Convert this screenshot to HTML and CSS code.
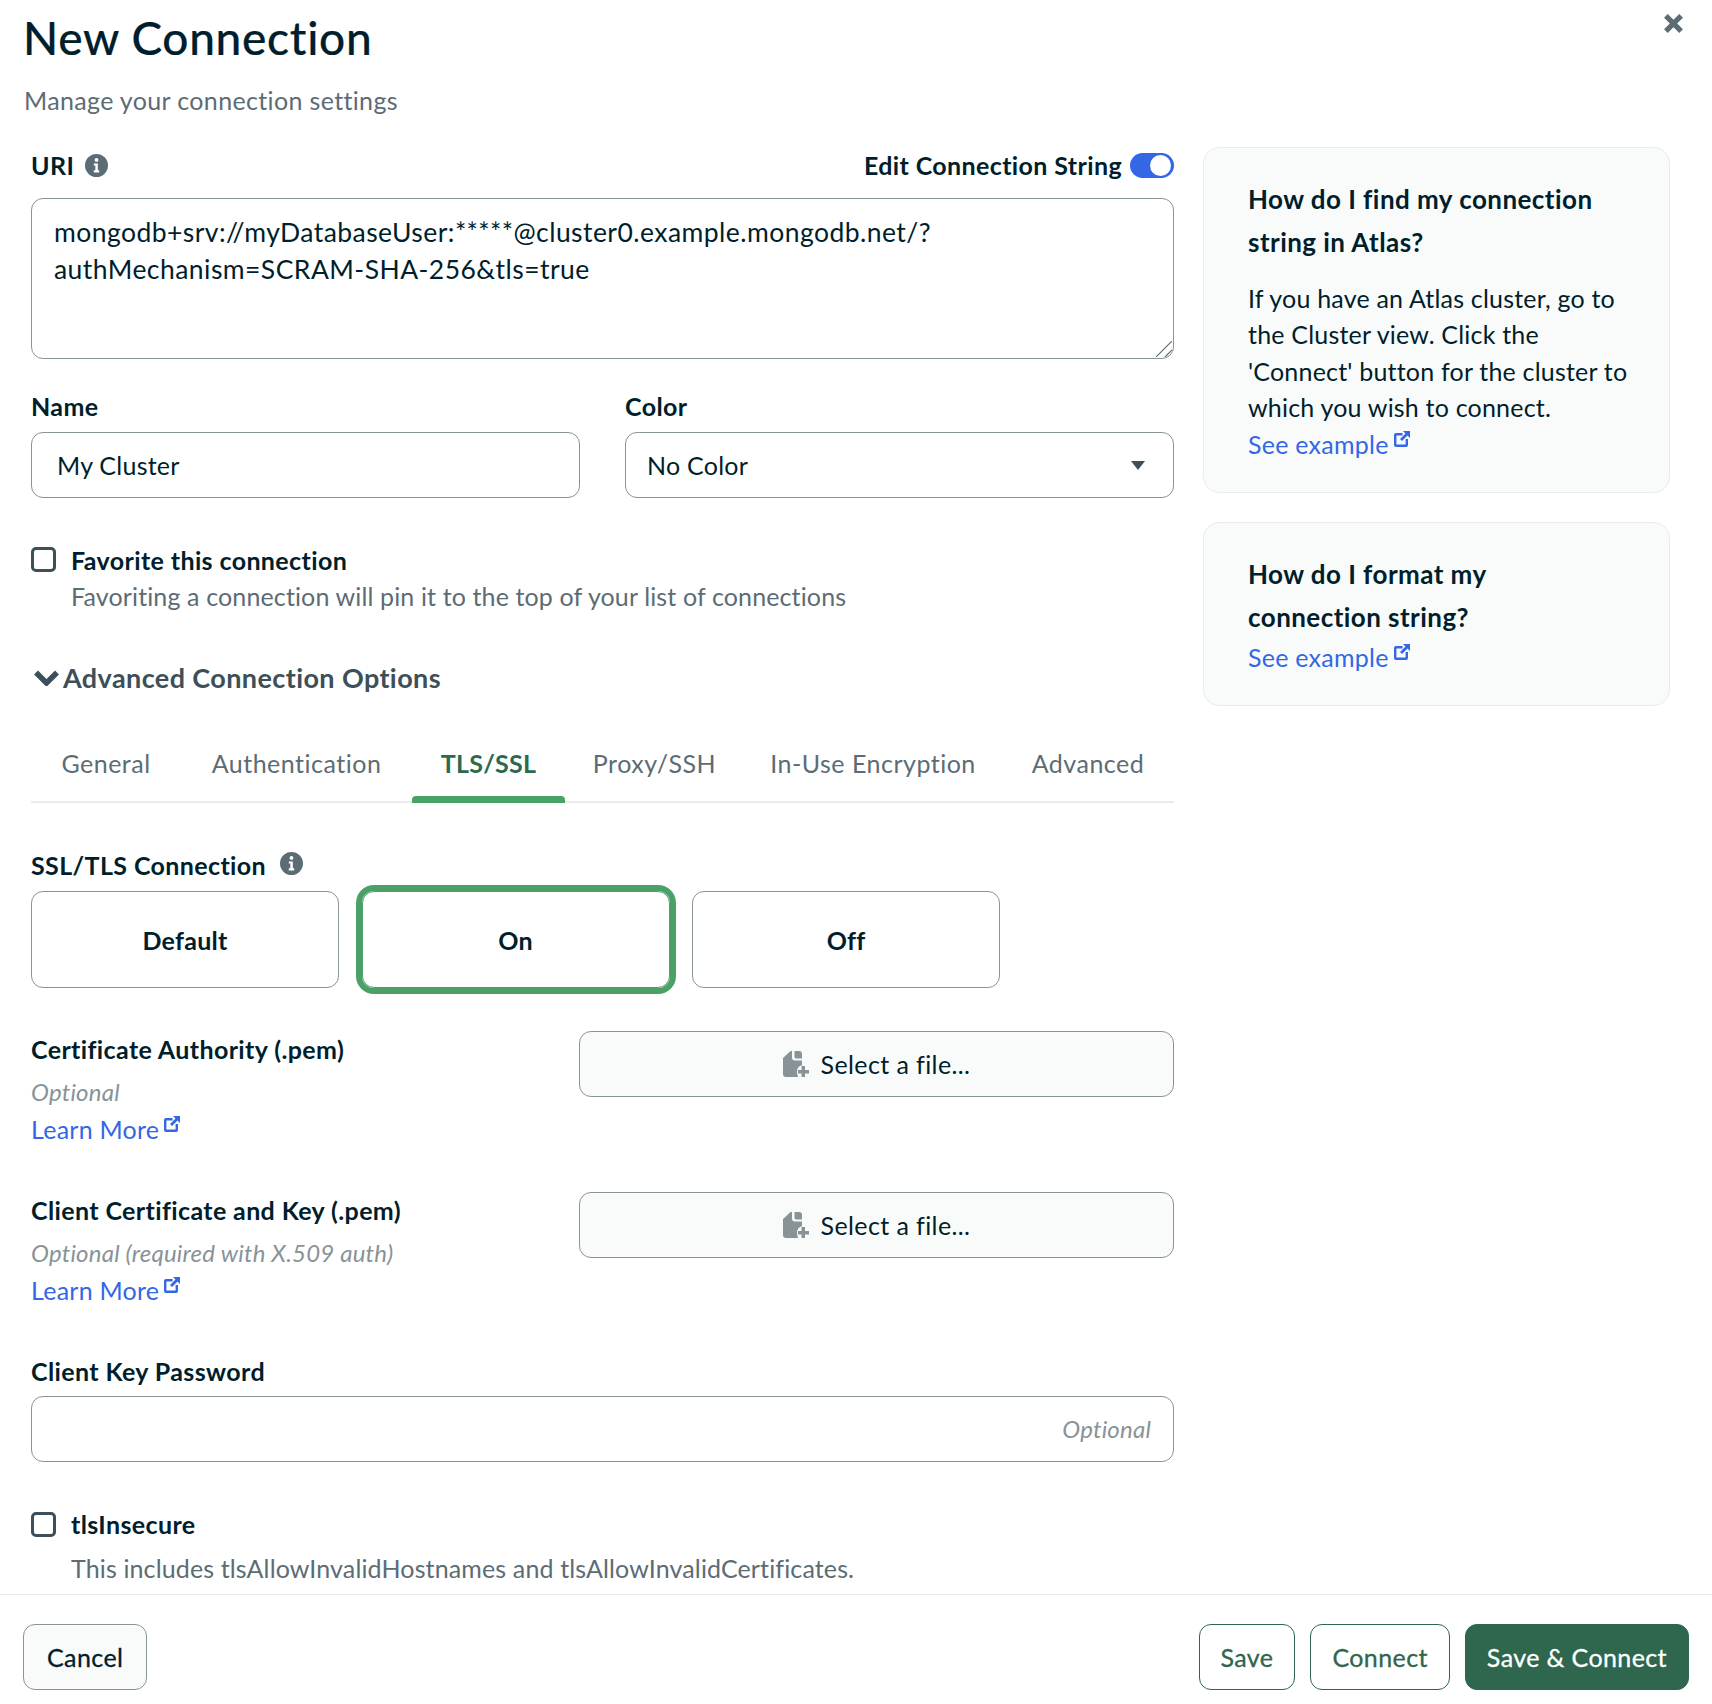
FILE: index.html
```html
<!DOCTYPE html>
<html lang="en">
<head>
  <meta charset="UTF-8">
  <title>New Connection</title>
  <link rel="stylesheet" href="styles.css">
</head>
<body>
  <svg class="icon-defs" width="0" height="0" aria-hidden="true">
    <symbol id="i-info" viewBox="0 0 24 24">
      <path fill-rule="evenodd" d="M12 0a12 12 0 1 1 0 24a12 12 0 0 1 0-24zM12 4.200a2 2 0 1 0 0 4a2 2 0 0 0 0-4zM9.200 10v2h1.600v5H9.200v2.200h5.600V17h-1.400v-7z"/>
    </symbol>
    <symbol id="i-ext" viewBox="0 0 16 16">
      <path d="M2 2h6.500v2.400H2.400v9.200h9.200V8H14v6a2 2 0 0 1-2 2H2a2 2 0 0 1-2-2V4a2 2 0 0 1 2-2z"/>
      <path d="M9 0h7v7l-2.500-2.500-5.500 5.500-2-2 5.500-5.500z"/>
    </symbol>
    <symbol id="i-file" viewBox="0 0 26 26">
      <path d="M7.500 0H9v6.500A3 3 0 0 0 12 9.500h7v4.800a6.500 6.500 0 0 0-5 6.200c0 2 .5 4 1.200 5.500H3a3 3 0 0 1-3-3V7z"/>
      <path d="M11.500 0H16a3 3 0 0 1 3 3v4.500h-6A1.500 1.500 0 0 1 11.500 6z"/>
      <path d="M18.500 15h3.500v4h4v3.500h-4V26h-3.500v-3.500h-3.500V19h3.500z"/>
    </symbol>
  </svg>

  <div class="modal">
    <button class="close" type="button" aria-label="Close">
      <svg viewBox="0 0 20 20" width="21" height="21"><path d="M1 4.500 4.500 1 10 6.500 15.500 1 19 4.500 13.500 10 19 15.500 15.500 19 10 13.500 4.500 19 1 15.500 6.500 10z"/></svg>
    </button>

    <header class="head">
      <h1>New Connection</h1>
      <p class="sub">Manage your connection settings</p>
    </header>

    <div class="main">
      <form class="form">
        <div class="uri-row">
          <label class="label with-info uri-label">URI<svg class="info"><use href="#i-info"/></svg></label>
          <div class="edit">
            <span class="label">Edit Connection String</span>
            <span class="toggle"><span class="knob"></span></span>
          </div>
        </div>
        <div class="uri-wrap">
          <textarea class="uri" readonly>mongodb+srv://myDatabaseUser:*****@cluster0.example.mongodb.net/?
authMechanism=SCRAM-SHA-256&amp;tls=true</textarea>
          <svg class="grip" viewBox="0 0 16 16" width="16" height="16"><path d="M0 16 16 0M9 16l7-7" fill="none" stroke="#5c6c75" stroke-width="1.200"/></svg>
        </div>

        <div class="name-row">
          <div class="field">
            <div class="label">Name</div>
            <div class="box name-value">My Cluster</div>
          </div>
          <div class="field">
            <div class="label">Color</div>
            <div class="box select">No Color <span class="caret"></span></div>
          </div>
        </div>

        <div class="check fav">
          <span class="checkbox"></span>
          <div>
            <div class="label">Favorite this connection</div>
            <div class="hint">Favoriting a connection will pin it to the top of your list of connections</div>
          </div>
        </div>

        <div class="advanced">
          <svg viewBox="0 0 25 16" width="25" height="16"><path d="M2 2.500 12.500 13 23 2.500" fill="none" stroke="currentColor" stroke-width="5.500"/></svg>
          Advanced Connection Options
        </div>

        <div class="tabs">
          <span class="tab">General</span>
          <span class="tab">Authentication</span>
          <span class="tab active">TLS/SSL</span>
          <span class="tab">Proxy/SSH</span>
          <span class="tab">In-Use Encryption</span>
          <span class="tab">Advanced</span>
        </div>

        <div class="label with-info ssl">SSL/TLS Connection<svg class="info raised"><use href="#i-info"/></svg></div>
        <div class="choices">
          <span class="choice">Default</span>
          <span class="choice on">On</span>
          <span class="choice">Off</span>
        </div>

        <div class="cert">
          <div class="cert-text">
            <div class="label">Certificate Authority (.pem)</div>
            <div class="opt">Optional</div>
            <a class="link learn">Learn More<svg class="ext"><use href="#i-ext"/></svg></a>
          </div>
          <div class="file"><svg class="file-icon"><use href="#i-file"/></svg>Select a file...</div>
        </div>

        <div class="cert">
          <div class="cert-text">
            <div class="label">Client Certificate and Key (.pem)</div>
            <div class="opt">Optional (required with X.509 auth)</div>
            <a class="link learn">Learn More<svg class="ext"><use href="#i-ext"/></svg></a>
          </div>
          <div class="file"><svg class="file-icon"><use href="#i-file"/></svg>Select a file...</div>
        </div>

        <div class="label key-label">Client Key Password</div>
        <div class="box key-box"><span class="opt">Optional</span></div>

        <div class="check insecure">
          <span class="checkbox"></span>
          <div>
            <div class="label">tlsInsecure</div>
            <div class="hint insecure-hint">This includes tlsAllowInvalidHostnames and tlsAllowInvalidCertificates.</div>
          </div>
        </div>
      </form>

      <aside class="side">
        <section class="card">
          <h2>How do I find my connection string in Atlas?</h2>
          <p>If you have an Atlas cluster, go to the Cluster view. Click the 'Connect' button for the cluster to which you wish to connect.</p>
          <a class="link">See example<svg class="ext"><use href="#i-ext"/></svg></a>
        </section>
        <section class="card">
          <h2>How do I format my<br>connection string?</h2>
          <a class="link">See example<svg class="ext"><use href="#i-ext"/></svg></a>
        </section>
      </aside>
    </div>

    <footer class="foot">
      <button class="btn cancel" type="button">Cancel</button>
      <div class="foot-right">
        <button class="btn outline" type="button">Save</button>
        <button class="btn outline" type="button">Connect</button>
        <button class="btn primary" type="button">Save &amp; Connect</button>
      </div>
    </footer>
  </div>
</body>
</html>
```

FILE: styles.css
```css
* {
  box-sizing: border-box;
}

body {
  margin: 0;
  background: #fff;
  color: #001e2b;
  font-family: "Lato", "Liberation Sans", sans-serif;
  font-size: 25px;
  line-height: 36px;
  letter-spacing: 0.25px;
}

.icon-defs {
  position: absolute;
}

.modal {
  position: relative;
  display: flex;
  flex-direction: column;
  height: 1704px;
  overflow: hidden;
}

.close {
  position: absolute;
  top: 13px;
  right: 28px;
  padding: 0;
  border: 0;
  background: none;
  fill: #5c6c75;
}

/* header */
.head {
  padding: 12px 24px 0;
}

h1 {
  margin: 0 0 0 -1px;
  font-size: 46px;
  line-height: 52px;
  font-weight: 500;
  letter-spacing: 0.7px;
  -webkit-text-stroke: 0.2px #001e2b;
}

.sub {
  margin: 18px 0 0;
  color: #5c6c75;
  letter-spacing: 0.35px;
}

/* main area */
.main {
  flex: 1;
  display: flex;
  align-items: flex-start;
  padding: 29px 42px 0 31px;
  overflow: hidden;
}

.form {
  width: 1143px;
  flex: none;
}

.label {
  font-weight: 700;
  letter-spacing: 0.38px;
}

.with-info {
  display: flex;
  align-items: center;
  gap: 14px;
}

.uri-label {
  gap: 11px;
}

.info {
  width: 23px;
  height: 23px;
  fill: #5c6c75;
}

.info.raised {
  margin-top: -4px;
}

.uri-row {
  display: flex;
  justify-content: space-between;
}

.edit {
  display: flex;
  align-items: center;
  gap: 8px;
}

.toggle {
  display: flex;
  justify-content: flex-end;
  width: 44px;
  height: 25px;
  padding: 2px 3px;
  border-radius: 13px;
  background: #3367e5;
}

.knob {
  width: 21px;
  height: 21px;
  border-radius: 50%;
  background: #fff;
}

.uri-wrap {
  position: relative;
  margin-top: 15px;
}

.uri {
  display: block;
  width: 100%;
  height: 161px;
  padding: 15px 22px;
  border: 1px solid #889397;
  border-radius: 12px;
  color: #001e2b;
  font: inherit;
  font-size: 26.500px;
  letter-spacing: 0.45px;
  line-height: 37px;
  outline: none;
  resize: none;
}

.grip {
  position: absolute;
  right: 2px;
  bottom: 2px;
}

.name-row {
  display: flex;
  gap: 45px;
  margin-top: 29px;
}

.field {
  flex: 1;
}

.field .box {
  margin-top: 8px;
}

.box {
  display: flex;
  align-items: center;
  height: 66px;
  border: 1px solid #889397;
  border-radius: 12px;
}

.name-value {
  padding: 0 25px;
}

.select {
  justify-content: space-between;
  padding: 0 28px 0 21px;
}

.caret {
  width: 0;
  height: 0;
  border-left: 7px solid transparent;
  border-right: 7px solid transparent;
  border-top: 9px solid #3d4f58;
}

.check {
  display: flex;
  gap: 15px;
}

.fav {
  margin-top: 44px;
}

.checkbox {
  flex: none;
  width: 25px;
  height: 25px;
  margin-top: 5px;
  border: 3px solid #3d4f58;
  border-radius: 5px;
}

.hint {
  color: #5c6c75;
  letter-spacing: 0.13px;
}

.advanced {
  display: flex;
  align-items: center;
  gap: 4px;
  margin-top: 46px;
  padding-left: 3px;
  color: #3d4f58;
  font-size: 27px;
  font-weight: 700;
  letter-spacing: 0.4px;
}

.tabs {
  display: grid;
  grid-template-columns: 150px 231px 153px 179px 258px 172px;
  margin-top: 29px;
  border-bottom: 2px solid #e8edeb;
}

.tab {
  position: relative;
  height: 76px;
  color: #5c6c75;
  letter-spacing: 0.5px;
  line-height: 76px;
  text-align: center;
  white-space: nowrap;
}

.tab.active {
  color: #2a6a4d;
  font-weight: 700;
  letter-spacing: 0.25px;
}

.tab.active::after {
  content: "";
  position: absolute;
  left: 0;
  right: 0;
  bottom: -2px;
  height: 7px;
  border-radius: 4px 4px 0 0;
  background: #47a266;
}

.ssl {
  margin-top: 44px;
}

.choices {
  display: flex;
  gap: 22.500px;
  margin-top: 8px;
}

.choice {
  display: flex;
  align-items: center;
  justify-content: center;
  width: 308px;
  height: 97px;
  border: 1px solid #889397;
  border-radius: 12px;
  font-weight: 700;
}

.choice.on {
  border-color: #4ba067;
  box-shadow: 0 0 0 6px #4ba067;
}

.cert {
  display: flex;
  margin-top: 43px;
}

.cert-text {
  width: 548px;
  padding-bottom: 2px;
}

.opt {
  color: #889397;
  font-size: 24px;
  font-style: italic;
  letter-spacing: 0.2px;
}

.cert-text .opt {
  margin-top: 7px;
}

.learn {
  display: block;
  margin-top: 1px;
}

.link {
  color: #3367e5;
}

.ext {
  width: 16px;
  height: 16px;
  margin-left: 5px;
  vertical-align: 7px;
  fill: #3367e5;
}

.file {
  display: flex;
  align-items: center;
  justify-content: center;
  gap: 12px;
  width: 595px;
  height: 66px;
  border: 1px solid #889397;
  border-radius: 12px;
  background: #f9fbfa;
  letter-spacing: 0.4px;
}

.file-icon {
  width: 26px;
  height: 26px;
  fill: #889397;
}

.key-label {
  margin-top: 43px;
}

.key-box {
  justify-content: flex-end;
  margin-top: 7px;
  padding: 0 22px;
}

.insecure {
  margin-top: 44px;
}

.insecure .checkbox {
  margin-top: 6px;
}

.insecure-hint {
  margin-top: 8px;
}

/* side cards */
.side {
  width: 467px;
  margin-left: 29px;
}

.card {
  padding: 30px 38px 30px 44px;
  border: 1px solid #e8edeb;
  border-radius: 16px;
  background: #f9fbfa;
}

.card + .card {
  margin-top: 29px;
}

h2 {
  margin: 0;
  font-size: 26px;
  line-height: 43px;
  font-weight: 700;
  letter-spacing: 0.45px;
}

.card p {
  margin: 16px 0 0;
  line-height: 36.400px;
  letter-spacing: 0.2px;
}

/* footer */
.foot {
  display: flex;
  justify-content: space-between;
  height: 110px;
  padding: 29px 23px 0;
  border-top: 1px solid #e8edeb;
}

.foot-right {
  display: flex;
  gap: 15px;
}

.btn {
  height: 66px;
  padding: 0 21px;
  border: 1px solid #889397;
  border-radius: 12px;
  background: #f9fbfa;
  color: #001e2b;
  font: inherit;
  font-size: 25px;
  letter-spacing: 0.4px;
  -webkit-text-stroke: 0.3px currentColor;
}

.btn.cancel {
  padding: 0 23px;
}

.btn.outline {
  border-color: #2e664e;
  background: #fff;
  color: #2e664e;
}

.btn.primary {
  border-color: #2e664e;
  background: #2e664e;
  color: #fff;
}
```
